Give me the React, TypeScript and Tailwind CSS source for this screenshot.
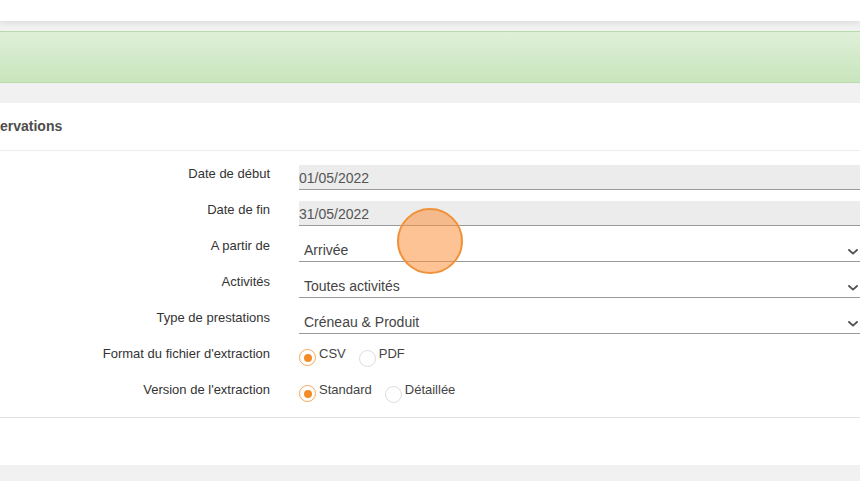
import React from "react";

function Chevron() {
  return (
    <svg width="10" height="6" viewBox="0 0 10 6" className="absolute right-[2px] top-[12px]">
      <path d="M1 1 L5 4.6 L9 1" fill="none" stroke="#555" strokeWidth="1.9" strokeLinecap="round" strokeLinejoin="round" />
    </svg>
  );
}

function Radio({ checked }: { checked?: boolean }) {
  return checked ? (
    <span className="mt-[3px] flex h-[17px] w-[17px] shrink-0 items-center justify-center rounded-full border-[1.5px] border-[#f3a65a] bg-white">
      <span className="h-[8px] w-[8px] rounded-full bg-[#f28c28]" />
    </span>
  ) : (
    <span className="mt-[4px] h-[17px] w-[17px] shrink-0 rounded-full border border-[#dcdcdc] bg-white" />
  );
}

function Row({ label, children }: { label: string; children: React.ReactNode }) {
  return (
    <div className="flex h-[36px]">
      <div className="w-[270px] shrink-0 pt-[1px] text-right text-[13px] leading-[16px] text-[#333]">{label}</div>
      <div className="ml-[29px] flex-1">{children}</div>
    </div>
  );
}

function TextInput({ value }: { value: string }) {
  return (
    <div className="h-[25px] border-b border-[#9a9a9a] bg-[#ececec] pt-[1px] text-[14px] leading-[24px] text-[#555]">
      {value}
    </div>
  );
}

function Select({ value }: { value: string }) {
  return (
    <div className="relative h-[25px] border-b border-[#9a9a9a] bg-white pl-[5px] pt-[1px] text-[14px] leading-[24px] text-[#444]">
      {value}
      <Chevron />
    </div>
  );
}

export default function App() {
  return (
    <div
      className="relative h-[481px] w-[860px] overflow-hidden bg-[#f1f1f1]"
      style={{ fontFamily: '"Liberation Sans", Arial, sans-serif' }}
    >
      <div className="relative z-10 h-[21px] bg-white shadow-[0_2px_6px_rgba(0,0,0,0.09)]" />
      <div className="pt-[10px]">
        <div className="h-[52px] border-y border-[#b8dbab] bg-gradient-to-b from-[#dff0d8] to-[#c8e5bc]" />
      </div>
      <div className="mt-[20px] bg-white">
        <div className="flex h-[48px] items-center border-b border-[#ececec] text-[14px] font-bold text-[#4d4d4d]">
          ervations
        </div>
        <div className="pt-[14px]">
          <Row label="Date de début">
            <TextInput value="01/05/2022" />
          </Row>
          <Row label="Date de fin">
            <TextInput value="31/05/2022" />
          </Row>
          <Row label="A partir de">
            <Select value="Arrivée" />
          </Row>
          <Row label="Activités">
            <Select value="Toutes activités" />
          </Row>
          <Row label="Type de prestations">
            <Select value="Créneau & Produit" />
          </Row>
          <Row label="Format du fichier d'extraction">
            <div className="flex pt-[1px] text-[13px] leading-[16px] text-[#444]">
              <Radio checked />
              <span className="ml-[3px] mr-[13px]">CSV</span>
              <Radio />
              <span className="ml-[3px]">PDF</span>
            </div>
          </Row>
          <Row label="Version de l'extraction">
            <div className="flex pt-[1px] text-[13px] leading-[16px] text-[#444]">
              <Radio checked />
              <span className="ml-[3px] mr-[13px]">Standard</span>
              <Radio />
              <span className="ml-[3px]">Détaillée</span>
            </div>
          </Row>
        </div>
        <div className="h-[48px] border-t border-[#e3e3e3]" />
      </div>
      <div className="absolute left-[397px] top-[208px] h-[66px] w-[66px] rounded-full border-[2.5px] border-[#f0913a] bg-[rgba(251,146,60,0.55)]" />
    </div>
  );
}
